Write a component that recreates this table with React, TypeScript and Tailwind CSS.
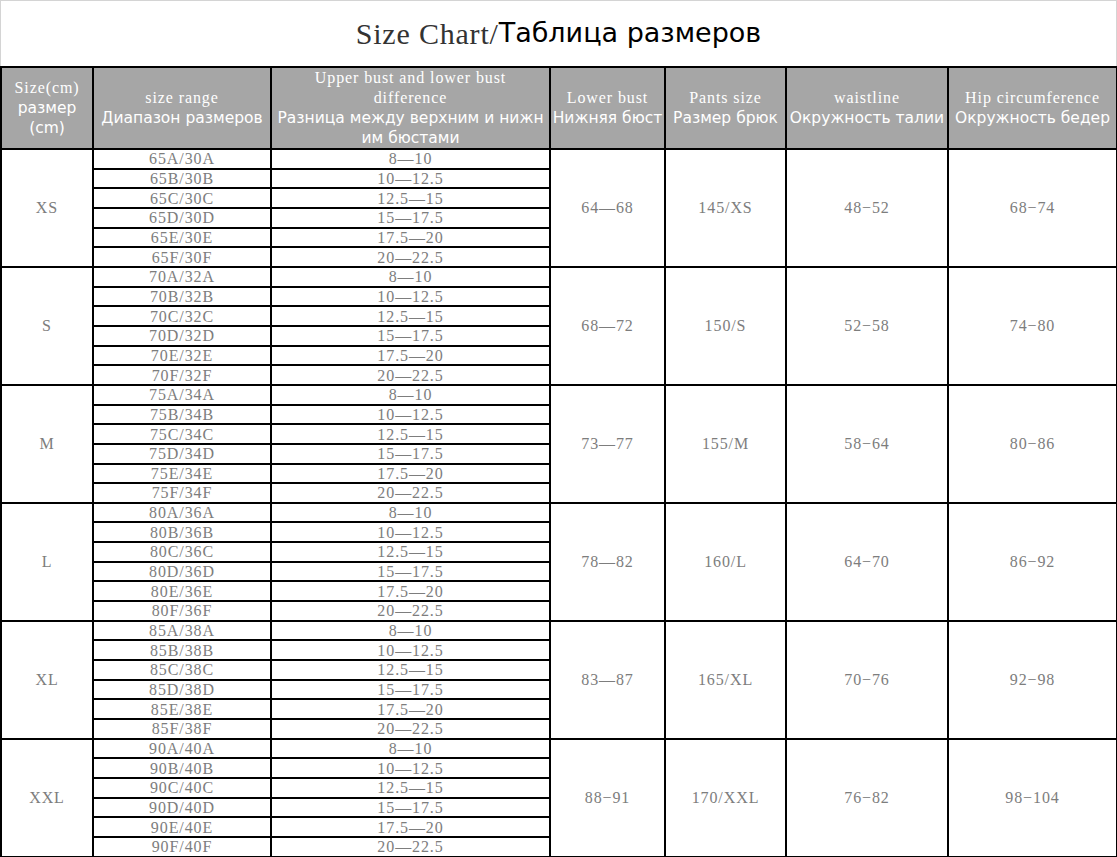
const groups = [
  { size: 'XS', base: '65', band: '30', lower: '64—68', pants: '145/XS', waist: '48−52', hip: '68−74' },
  { size: 'S', base: '70', band: '32', lower: '68—72', pants: '150/S', waist: '52−58', hip: '74−80' },
  { size: 'M', base: '75', band: '34', lower: '73—77', pants: '155/M', waist: '58−64', hip: '80−86' },
  { size: 'L', base: '80', band: '36', lower: '78—82', pants: '160/L', waist: '64−70', hip: '86−92' },
  { size: 'XL', base: '85', band: '38', lower: '83—87', pants: '165/XL', waist: '70−76', hip: '92−98' },
  { size: 'XXL', base: '90', band: '40', lower: '88−91', pants: '170/XXL', waist: '76−82', hip: '98−104' },
];

const cups = ['A', 'B', 'C', 'D', 'E', 'F'];
const diffs = ['8—10', '10—12.5', '12.5—15', '15—17.5', '17.5—20', '20—22.5'];

const serif = "font-['Liberation_Serif',serif]";
const sans = "font-['DejaVu_Sans',sans-serif]";

function HeadCell({ en, ru }: { en: string; ru: string }) {
  return (
    <th className="border-2 border-black bg-[#a6a6a6] font-normal text-white leading-[20px] align-middle px-0">
      <div className={`${serif} text-[16px] tracking-[0.9px]`}>{en}</div>
      <div className={`${sans} text-[15.5px] whitespace-nowrap`}>{ru}</div>
    </th>
  );
}

export default function App() {
  return (
    <div className="w-[1117px] bg-white">
      <div className="h-[66px] border-t border-r border-l border-[#d4d4d4] flex items-center justify-center">
        <span className={`${serif} text-[30px] font-light text-[#333] tracking-[0.8px]`}>Size Chart/</span>
        <span className={`${sans} text-[27px] text-black`}>Таблица размеров</span>
      </div>
      <table className="table-fixed border-collapse w-[1116px] text-center">
        <colgroup>
          <col className="w-[92px]" />
          <col className="w-[178px]" />
          <col className="w-[279px]" />
          <col className="w-[115px]" />
          <col className="w-[121px]" />
          <col className="w-[162px]" />
          <col className="w-[169px]" />
        </colgroup>
        <thead>
          <tr className="h-[80px]">
            <th className="border-2 border-black bg-[#a6a6a6] font-normal text-white leading-[20px]">
              <div className={`${serif} text-[16px] tracking-[0.9px]`}>Size(cm)</div>
              <div className={`${sans} text-[15.5px]`}>размер</div>
              <div className={`${sans} text-[15.5px]`}>(cm)</div>
            </th>
            <HeadCell en="size range" ru="Диапазон размеров" />
            <th className="border-2 border-black bg-[#a6a6a6] font-normal text-white leading-[20px]">
              <div className={`${serif} text-[16px] tracking-[0.9px]`}>Upper bust and lower bust</div>
              <div className={`${serif} text-[16px] tracking-[0.9px]`}>difference</div>
              <div className={`${sans} text-[15.5px] whitespace-nowrap`}>Разница между верхним и нижн</div>
              <div className={`${sans} text-[15.5px]`}>им бюстами</div>
            </th>
            <HeadCell en="Lower bust" ru="Нижняя бюст" />
            <HeadCell en="Pants size" ru="Размер брюк" />
            <HeadCell en="waistline" ru="Окружность талии" />
            <HeadCell en="Hip circumference" ru="Окружность бедер" />
          </tr>
        </thead>
        <tbody className={`${serif} text-[16px] text-[#7d7d7d] tracking-[0.9px]`}>
          {groups.map((g) =>
            cups.map((c, i) => (
              <tr key={g.size + c} className="h-[19.67px]">
                {i === 0 && (
                  <td rowSpan={6} className="border-2 border-black">{g.size}</td>
                )}
                <td className="border-2 border-black p-0 leading-[15px]">{`${g.base}${c}/${g.band}${c}`}</td>
                <td className="border-2 border-black p-0 leading-[15px]">{diffs[i]}</td>
                {i === 0 && (
                  <>
                    <td rowSpan={6} className="border-2 border-black">{g.lower}</td>
                    <td rowSpan={6} className="border-2 border-black">{g.pants}</td>
                    <td rowSpan={6} className="border-2 border-black">{g.waist}</td>
                    <td rowSpan={6} className="border-2 border-black">{g.hip}</td>
                  </>
                )}
              </tr>
            ))
          )}
        </tbody>
      </table>
    </div>
  );
}
